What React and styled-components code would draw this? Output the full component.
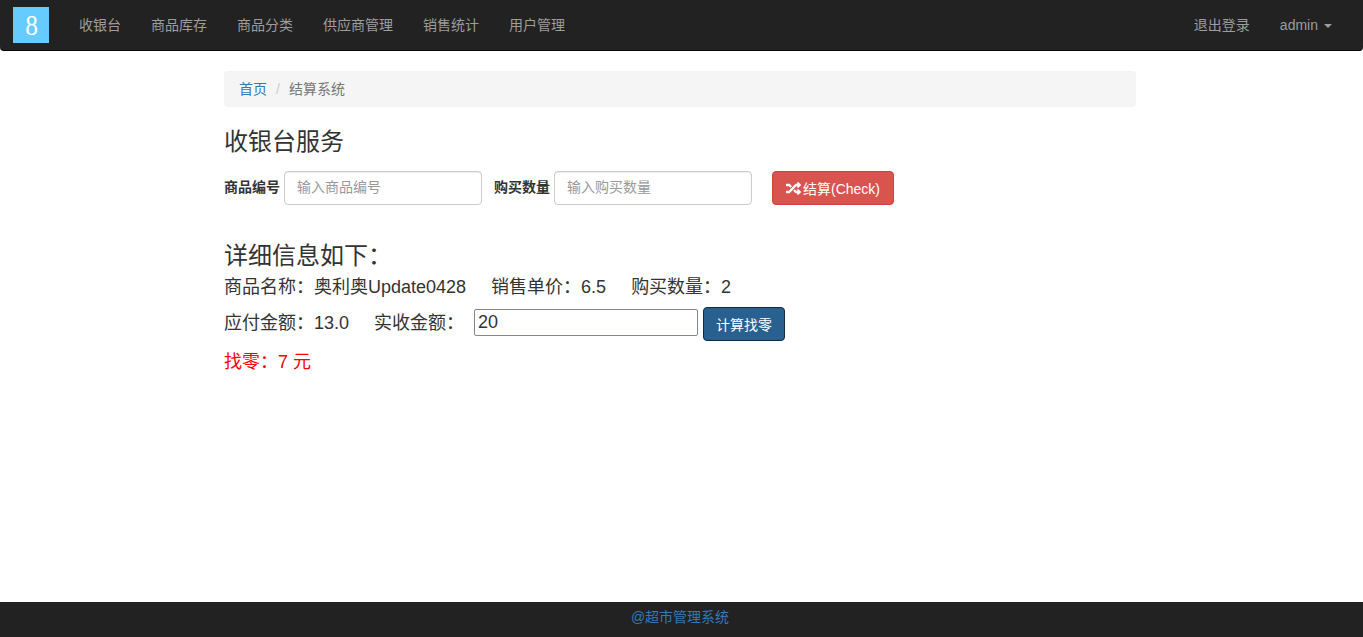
import React from "react";
import styled, { createGlobalStyle } from "styled-components";
import { FaRandom } from "react-icons/fa";

const GlobalStyle = createGlobalStyle`
  html, body {
    margin: 0;
    padding: 0;
    height: 100%;
  }
  body {
    font-family: "Liberation Sans", "Noto Sans CJK SC", sans-serif;
    font-size: 14px;
    line-height: 20px;
    color: #333;
    background: #fff;
  }
  * {
    box-sizing: border-box;
  }
`;

const NAV_ITEMS = ["收银台", "商品库存", "商品分类", "供应商管理", "销售统计", "用户管理"];

const Page = styled.div`
  height: 637px;
  display: flex;
  flex-direction: column;
`;

const Navbar = styled.nav`
  height: 51px;
  flex-shrink: 0;
  display: flex;
  align-items: flex-start;
  justify-content: space-between;
  background: #222;
  border: 1px solid #080808;
  border-width: 0 0 1px;
  border-radius: 0 0 4px 4px;
  padding-right: 16px;
`;

const NavGroup = styled.div`
  display: flex;
  align-items: flex-start;
`;

const Brand = styled.div`
  width: 36px;
  height: 36px;
  margin: 7px 15px 0 13px;
  background: #66ccff;
  color: #fff;
  font-family: "Liberation Serif", serif;
  font-size: 30px;
  font-weight: 400;
  line-height: 36px;
  text-align: center;
`;

const BrandDigit = styled.span`
  display: inline-block;
  transform: scaleX(0.85);
`;

const NavLink = styled.a`
  display: block;
  padding: 15px;
  line-height: 20px;
  color: #9d9d9d;
  white-space: nowrap;
`;

const Caret = styled.span`
  display: inline-block;
  width: 0;
  height: 0;
  margin-left: 6px;
  vertical-align: middle;
  border-top: 4px solid #9d9d9d;
  border-left: 4px solid transparent;
  border-right: 4px solid transparent;
`;

const Container = styled.main`
  flex: 1;
  width: 912px;
  margin-left: 224px;
  padding-top: 20px;
`;

const Breadcrumb = styled.div`
  height: 36px;
  padding: 8px 15px;
  background: #f5f5f5;
  border-radius: 4px;
  color: #777;
`;

const CrumbLink = styled.a`
  color: #337ab7;
`;

const CrumbDivider = styled.span`
  padding: 0 9px;
  color: #ccc;
`;

const Title = styled.h3`
  margin: 22px 0 10px;
  font-size: 24px;
  font-weight: 400;
  line-height: 26px;
  color: #333;
`;

const SearchForm = styled.form`
  display: flex;
  align-items: center;
  margin-top: 16px;
`;

const FieldLabel = styled.label`
  margin: 0 4px 2px 0;
  font-weight: 700;
  color: #333;
`;

const TextField = styled.input`
  width: 198px;
  height: 34px;
  padding: 5px 12px 7px;
  margin-right: ${(props) => props.$gap}px;
  font: inherit;
  color: #555;
  background: #fff;
  border: 1px solid #ccc;
  border-radius: 4px;
  box-shadow: inset 0 1px 1px rgba(0, 0, 0, 0.075);
  &::placeholder {
    color: #999;
    opacity: 1;
  }
`;

const Button = styled.button`
  display: inline-flex;
  align-items: center;
  justify-content: center;
  height: 34px;
  padding: 0;
  font-family: inherit;
  font-size: 14px;
  color: #fff;
  border: 1px solid ${(props) => props.$border};
  border-radius: 4px;
  background: ${(props) => props.$bg};
  white-space: nowrap;
`;

const CheckButton = styled(Button)`
  width: 122px;
  svg {
    width: 15px;
    height: 15px;
    margin-right: 2px;
  }
`;

const ChangeButton = styled(Button)`
  width: 82px;
  margin-top: 2px;
`;

const Details = styled.section`
  margin-top: 35px;
  font-size: 18px;
  color: #333;
`;

const DetailsTitle = styled.h3`
  margin: 0;
  font-size: 24px;
  font-weight: 400;
  line-height: 32px;
`;

const InfoRow = styled.div`
  display: flex;
  align-items: center;
  height: ${(props) => props.$height}px;
  line-height: 24px;
  white-space: nowrap;
`;

const InfoItem = styled.span`
  margin-right: ${(props) => props.$gap ?? 25}px;
`;

const PaidInput = styled.input`
  width: 224px;
  height: 27px;
  margin: 0 5px 2px 0;
  padding: 1px 3px;
  font: inherit;
  color: #333;
  background: #fff;
  border: 1px solid #858599;
  border-radius: 2px;
`;

const ChangeRow = styled(InfoRow)`
  color: #ff0000;
`;

const Footer = styled.footer`
  height: 35px;
  flex-shrink: 0;
  padding-right: 3px;
  background: #222;
  text-align: center;
  line-height: 31px;
  color: #337ab7;
`;

export default function App() {
  return (
    <Page>
      <GlobalStyle />
      <Navbar>
        <NavGroup>
          <Brand>
            <BrandDigit>8</BrandDigit>
          </Brand>
          {NAV_ITEMS.map((item) => (
            <NavLink key={item}>{item}</NavLink>
          ))}
        </NavGroup>
        <NavGroup>
          <NavLink>退出登录</NavLink>
          <NavLink>
            admin
            <Caret />
          </NavLink>
        </NavGroup>
      </Navbar>
      <Container>
        <Breadcrumb>
          <CrumbLink>首页</CrumbLink>
          <CrumbDivider>/</CrumbDivider>
          结算系统
        </Breadcrumb>
        <Title>收银台服务</Title>
        <SearchForm>
          <FieldLabel>商品编号</FieldLabel>
          <TextField $gap={12} placeholder="输入商品编号" />
          <FieldLabel>购买数量</FieldLabel>
          <TextField $gap={20} placeholder="输入购买数量" />
          <CheckButton type="button" $bg="#d9534f" $border="#d43f3a">
            <FaRandom />
            结算(Check)
          </CheckButton>
        </SearchForm>
        <Details>
          <DetailsTitle>详细信息如下：</DetailsTitle>
          <InfoRow $height={30}>
            <InfoItem>商品名称：奥利奥Update0428</InfoItem>
            <InfoItem>销售单价：6.5</InfoItem>
            <InfoItem>购买数量：2</InfoItem>
          </InfoRow>
          <InfoRow $height={42}>
            <InfoItem>应付金额：13.0</InfoItem>
            <InfoItem $gap={10}>实收金额：</InfoItem>
            <PaidInput defaultValue="20" />
            <ChangeButton type="button" $bg="#286090" $border="#122b40">
              计算找零
            </ChangeButton>
          </InfoRow>
          <ChangeRow $height={36}>找零：7 元</ChangeRow>
        </Details>
      </Container>
      <Footer>@超市管理系统</Footer>
    </Page>
  );
}
